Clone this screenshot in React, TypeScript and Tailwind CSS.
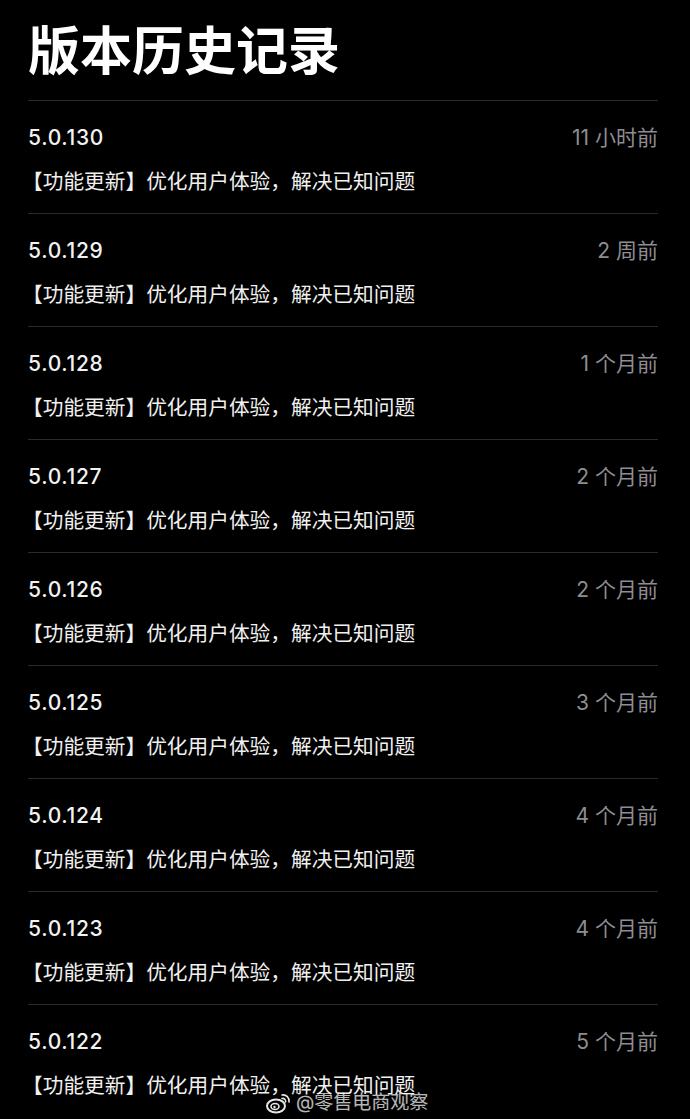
const versions = [
  { v: '5.0.130', t: '11 小时前' },
  { v: '5.0.129', t: '2 周前' },
  { v: '5.0.128', t: '1 个月前' },
  { v: '5.0.127', t: '2 个月前' },
  { v: '5.0.126', t: '2 个月前' },
  { v: '5.0.125', t: '3 个月前' },
  { v: '5.0.124', t: '4 个月前' },
  { v: '5.0.123', t: '4 个月前' },
  { v: '5.0.122', t: '5 个月前' },
];

function WeiboLogo() {
  return (
    <svg width="26" height="22" viewBox="0 0 26 22" fill="none">
      <ellipse cx="10" cy="14" rx="9" ry="6.5" stroke="white" strokeWidth="2" />
      <ellipse cx="9" cy="14.5" rx="4" ry="3" stroke="white" strokeWidth="1.6" />
      <circle cx="8.5" cy="15" r="1.2" fill="white" />
      <path d="M16 3a6 6 0 0 1 7 7" stroke="white" strokeWidth="1.6" strokeLinecap="round" />
      <path d="M16 6.5a2.8 2.8 0 0 1 3.5 3.5" stroke="white" strokeWidth="1.6" strokeLinecap="round" />
    </svg>
  );
}

export default function App() {
  return (
    <div
      className="relative w-[690px] h-[1119px] overflow-hidden bg-black pl-[28px] pr-[32px] text-white"
      style={{ fontFamily: 'Inter, "Noto Sans CJK SC", sans-serif' }}
    >
      {/* Title */}
      <div className="h-[100px] flex items-center">
        <h1 className="text-[52px] font-bold leading-none mt-[3px]">版本历史记录</h1>
      </div>

      {/* Version list */}
      {versions.map((item) => (
        <div key={item.v} className="h-[113px] border-t border-[#2a2a2c]">
          <div className="flex items-center justify-between h-[73px] pt-[1px]">
            <span className="text-[21px] font-medium tracking-[0.7px] text-[#f2f2f2]">{item.v}</span>
            <span className="text-[21px] text-[#8d8d92]">{item.t}</span>
          </div>
          <p className="text-[20.7px] leading-none text-[#f0f0f0] -ml-[6px] -mt-[2px]">
            【功能更新】优化用户体验，解决已知问题
          </p>
        </div>
      ))}

      {/* Watermark */}
      <div className="absolute left-[266px] top-[1089px] flex items-center gap-[4px] opacity-90">
        <WeiboLogo />
        <span className="text-[19px] text-white/80">@零售电商观察</span>
      </div>
    </div>
  );
}
